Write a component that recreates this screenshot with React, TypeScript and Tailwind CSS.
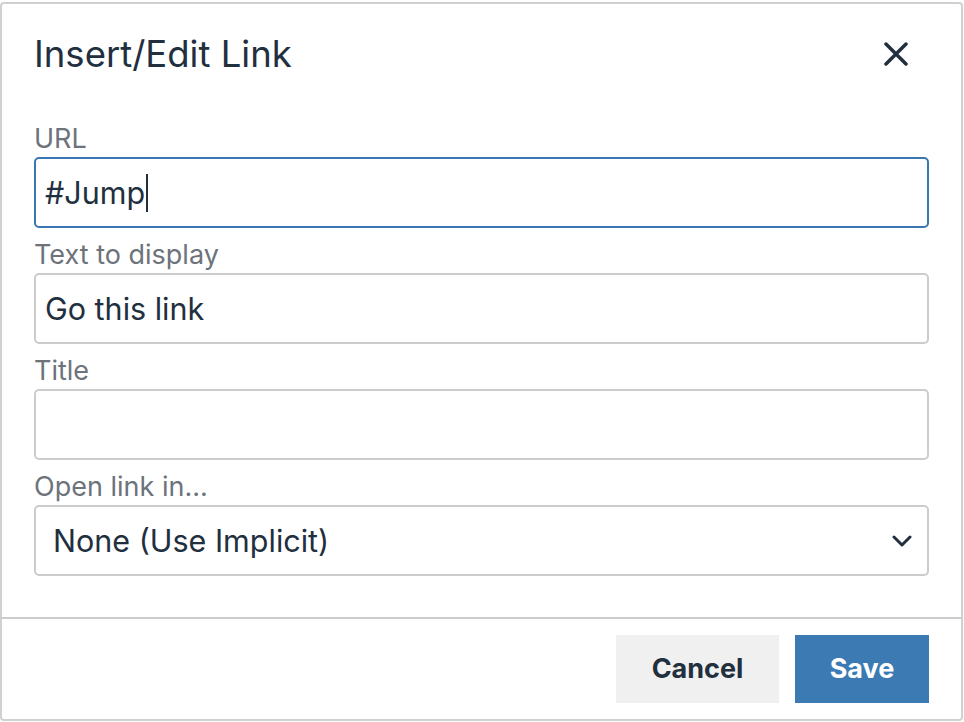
const fieldInput =
  "h-[71px] w-full rounded-[5px] border-2 border-[#cccccc] bg-white flex items-center px-[9px] text-[30.5px] text-[#222f3e]";

function Field({
  label,
  children,
}: {
  label: string;
  children: React.ReactNode;
}) {
  return (
    <div className="mb-[12px]">
      <div className="h-[30px] mb-[3px] leading-[30px] text-[27px] text-[#6d737b]">
        {label}
      </div>
      {children}
    </div>
  );
}

function App() {
  return (
    <div
      className="min-h-screen bg-white pt-[2px]"
      style={{ fontFamily: "Inter, 'Noto Sans', sans-serif" }}
    >
      <div className="w-[963px] h-[719px] rounded-[4px] border-2 border-[#d0d0d0] bg-white flex flex-col">
        <div className="h-[100px] flex items-center justify-between pl-[32px] pr-[51px]">
          <h1 className="text-[36.5px] text-[#222f3e] leading-none">
            Insert/Edit Link
          </h1>
          <button className="w-[28px] h-[28px] flex items-center justify-center">
            <svg width="24" height="24" viewBox="0 0 24 24">
              <path
                d="M2 2 L22 22 M22 2 L2 22"
                stroke="#222f3e"
                strokeWidth="3.5"
                strokeLinecap="round"
              />
            </svg>
          </button>
        </div>

        <div className="px-[32px] pt-[20px] pb-[29px]">
          <Field label="URL">
            <div className="h-[71px] w-full rounded-[5px] border-2 border-[#3a77b2] bg-white flex items-center px-[9px] text-[30.5px] text-[#222f3e]">
              #Jump
              <span className="inline-block w-[2px] h-[38px] bg-[#222f3e] ml-[1px]" />
            </div>
          </Field>
          <Field label="Text to display">
            <div className={fieldInput}>Go this link</div>
          </Field>
          <Field label="Title">
            <div className={fieldInput}></div>
          </Field>
          <Field label="Open link in...">
            <div className="h-[71px] w-full rounded-[5px] border-2 border-[#cccccc] bg-white flex items-center justify-between pl-[17px] pr-[15px] text-[30.5px] text-[#222f3e]">
              <span>None (Use Implicit)</span>
              <svg width="20" height="12" viewBox="0 0 20 12">
                <path
                  d="M2 2 L10 10 L18 2"
                  fill="none"
                  stroke="#222f3e"
                  strokeWidth="3"
                  strokeLinecap="round"
                  strokeLinejoin="round"
                />
              </svg>
            </div>
          </Field>
        </div>

        <div className="border-t-2 border-[#cccccc] flex-1 flex justify-end items-start gap-[16px] pt-[16px] pr-[32px]">
          <button className="w-[163px] h-[68px] bg-[#f0f0f0] text-[#222f3e] text-[27px] font-bold">
            Cancel
          </button>
          <button className="w-[134px] h-[68px] bg-[#3c7ab4] text-white text-[27px] font-bold">
            Save
          </button>
        </div>
      </div>
    </div>
  );
}

export default App;
